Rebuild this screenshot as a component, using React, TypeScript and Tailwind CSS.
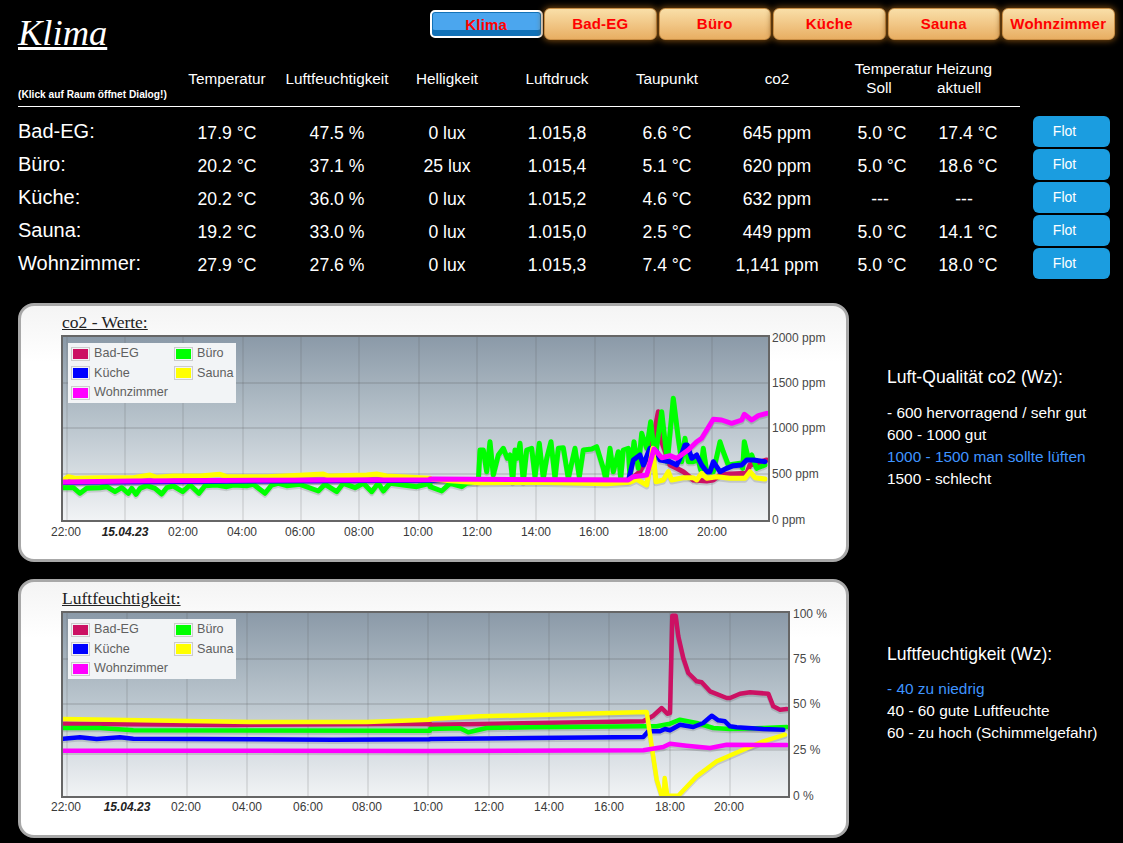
import React from "react";

type P = [number, number];
const z = (pts: P[], ox: number, oy: number): string =>
  pts.map(([x, y]) => `${(ox + x / 3).toFixed(1)},${(oy + y / 3).toFixed(1)}`).join(" ");
const join = (...parts: string[]) => parts.join(" ");

const C = { bad: "#cc1163", buero: "#00ff00", kueche: "#0000ff", sauna: "#ffff00", wohn: "#ff00ff" };

const co2L = 0, co2R = 430, co2Y = 295;
const co2Series: { color: string; d: string }[] = [
  {
    color: C.bad,
    d: join(
      z([[190, 560], [800, 556], [1290, 554]], co2L, co2Y),
      z([[145, 556], [600, 555], [630, 530], [650, 490], [670, 430], [685, 350], [695, 440], [720, 510], [740, 520], [760, 530], [790, 555], [830, 558], [850, 555], [870, 540], [900, 537], [950, 535], [960, 510], [1010, 495]], co2R, co2Y)
    ),
  },
  {
    color: C.buero,
    d: join(
      z([[190, 578], [220, 578], [240, 595], [260, 580], [300, 578], [320, 575], [345, 590], [365, 578], [385, 595], [395, 580], [408, 598], [420, 580], [440, 572], [465, 580], [485, 597], [500, 578], [520, 573], [548, 590], [570, 570], [597, 595], [615, 572], [650, 570], [680, 575], [700, 570], [740, 572], [760, 568], [795, 595], [815, 570], [835, 565], [860, 572], [900, 568], [955, 588], [975, 568], [1010, 590], [1030, 565], [1065, 578], [1090, 565], [1115, 590], [1135, 565], [1150, 588], [1170, 565], [1210, 570], [1250, 575], [1290, 565]], co2L, co2Y),
      z([[0, 575], [35, 588], [60, 565], [95, 575], [110, 565], [145, 560], [150, 465], [160, 465], [170, 530], [180, 440], [190, 540], [205, 480], [220, 460], [232, 490], [240, 480], [248, 560], [255, 465], [262, 490], [270, 445], [280, 560], [290, 465], [305, 460], [315, 545], [328, 445], [340, 550], [350, 490], [363, 440], [375, 550], [385, 460], [400, 458], [415, 550], [435, 460], [448, 545], [460, 465], [485, 462], [500, 455], [520, 520], [528, 555], [540, 460], [550, 530], [565, 470], [572, 550], [580, 465], [595, 460], [600, 550], [612, 440], [625, 520], [635, 415], [650, 460], [662, 380], [675, 490], [695, 350], [712, 500], [730, 310], [745, 430], [755, 500], [765, 430], [775, 500], [790, 500], [805, 495], [812, 525], [820, 460], [830, 530], [850, 530], [870, 440], [880, 470], [895, 510], [930, 505], [938, 520], [943, 440], [955, 490], [965, 480], [980, 520], [1005, 510]], co2R, co2Y)
    ),
  },
  {
    color: C.kueche,
    d: join(
      z([[190, 562], [800, 558], [1290, 556]], co2L, co2Y),
      z([[145, 557], [595, 558], [610, 495], [630, 480], [640, 510], [660, 460], [680, 470], [690, 495], [720, 500], [740, 510], [750, 490], [765, 450], [772, 450], [785, 490], [800, 480], [815, 510], [830, 530], [840, 530], [850, 500], [870, 530], [890, 520], [910, 512], [935, 510], [950, 495], [970, 495], [1005, 500]], co2R, co2Y)
    ),
  },
  {
    color: C.sauna,
    d: join(
      z([[190, 555], [205, 545], [225, 550], [300, 548], [400, 548], [450, 540], [470, 547], [520, 543], [600, 543], [660, 538], [680, 545], [800, 545], [900, 541], [970, 537], [985, 543], [1100, 540], [1130, 537], [1160, 543], [1290, 550]], co2L, co2Y),
      z([[0, 553], [145, 563], [310, 562], [530, 566], [600, 562], [620, 553], [650, 570], [668, 460], [678, 560], [700, 555], [715, 530], [725, 555], [760, 548], [790, 548], [800, 555], [815, 535], [830, 550], [860, 545], [900, 550], [945, 550], [960, 530], [975, 548], [1005, 552]], co2R, co2Y)
    ),
  },
  {
    color: C.wohn,
    d: join(
      z([[190, 561], [400, 558], [800, 556], [1290, 554]], co2L, co2Y),
      z([[0, 552], [595, 555], [610, 545], [650, 540], [672, 462], [695, 488], [720, 482], [740, 490], [775, 465], [800, 440], [815, 430], [850, 373], [875, 375], [905, 385], [935, 375], [943, 358], [965, 375], [985, 362], [1010, 355]], co2R, co2Y)
    ),
  },
];

const humY = 573;
const humSeries: { color: string; d: string }[] = [
  {
    color: C.bad,
    d: join(
      z([[190, 452], [700, 456], [1290, 452]], 0, humY),
      z([[0, 455], [200, 452], [640, 445], [670, 428], [695, 405], [712, 422], [720, 420], [727, 128], [737, 128], [745, 190], [760, 255], [775, 300], [800, 325], [815, 328], [840, 355], [890, 375], [900, 375], [930, 362], [960, 358], [1015, 362], [1030, 400], [1050, 410], [1070, 408]], 430, humY)
    ),
  },
  {
    color: C.buero,
    d: join(
      z([[190, 465], [300, 465], [400, 472], [1290, 473]], 0, humY),
      z([[0, 468], [90, 466], [115, 478], [170, 465], [300, 463], [640, 460], [680, 460], [720, 452], [750, 440], [800, 450], [850, 465], [900, 468], [1000, 465], [1070, 462]], 430, humY)
    ),
  },
  {
    color: C.kueche,
    d: join(
      z([[190, 497], [240, 493], [290, 498], [360, 493], [400, 497], [1000, 500], [1290, 499]], 0, humY),
      z([[0, 498], [300, 495], [640, 492], [655, 475], [690, 475], [705, 468], [720, 472], [750, 455], [790, 462], [820, 450], [845, 428], [865, 442], [885, 445], [900, 460], [920, 463], [1000, 468], [1060, 470]], 430, humY)
    ),
  },
  {
    color: C.sauna,
    d: join(
      z([[190, 438], [750, 447], [1100, 447], [1290, 440]], 0, humY),
      z([[0, 438], [150, 430], [350, 425], [650, 417], [665, 520], [680, 620], [695, 668], [702, 668], [704, 615], [712, 668], [745, 668], [800, 610], [860, 565], [940, 530], [1000, 505], [1065, 485]], 430, humY)
    ),
  },
  {
    color: C.wohn,
    d: join(
      z([[190, 533], [1290, 534]], 0, humY),
      z([[0, 534], [640, 532], [700, 522], [720, 512], [770, 518], [840, 525], [890, 515], [1070, 516]], 430, humY)
    ),
  },
];

type ChartProps = {
  id: string;
  vbY: number;
  plot: { l: number; r: number; t: number; b: number };
  vlines: number[];
  hlines: number[];
  xticks: [number, string][];
  xY: number;
  yticks: [number, string][];
  yX: number;
  sw: number;
  series: { color: string; d: string }[];
};

function Legend() {
  const items: [string, string][] = [
    ["Bad-EG", C.bad],
    ["Büro", C.buero],
    ["Küche", C.kueche],
    ["Sauna", C.sauna],
    ["Wohnzimmer", C.wohn],
  ];
  return (
    <div className="absolute left-[47px] top-[13px] w-[168px] h-[60px] bg-[#f2f4f6] pl-[3px] pt-[1px] grid grid-cols-[103px_65px] auto-rows-[19.5px] text-[12.6px] text-[#606060]">
      {items.map(([n, c]) => (
        <div key={n} className="flex items-center">
          <span className="border border-[#ccc] p-px w-[19px] h-[14px] flex mr-[4px] shrink-0">
            <span className="w-full h-full" style={{ background: c }} />
          </span>
          <span className="whitespace-nowrap">{n}</span>
        </div>
      ))}
    </div>
  );
}

function Chart({ id, vbY, plot, vlines, hlines, xticks, xY, yticks, yX, sw, series }: ChartProps) {
  return (
    <div className="relative w-[825px] h-[229px]">
      <svg width="825" height="229" viewBox={`21 ${vbY} 825 229`} className="block">
        <defs>
          <linearGradient id={`g${id}`} x1="0" y1="0" x2="0" y2="1">
            <stop offset="0" stopColor="#8b9aa8" />
            <stop offset="0.5" stopColor="#bcc7cf" />
            <stop offset="1" stopColor="#f1f3f5" />
          </linearGradient>
          <clipPath id={`c${id}`}>
            <rect x={plot.l} y={plot.t} width={plot.r - plot.l} height={plot.b - plot.t} />
          </clipPath>
        </defs>
        <rect x={plot.l} y={plot.t} width={plot.r - plot.l} height={plot.b - plot.t} fill={`url(#g${id})`} />
        {vlines.map((x) => (
          <line key={x} x1={x} x2={x} y1={plot.t} y2={plot.b} stroke="#545454" strokeOpacity="0.25" strokeWidth="1" />
        ))}
        {hlines.map((y) => (
          <line key={y} x1={plot.l} x2={plot.r} y1={y} y2={y} stroke="#545454" strokeOpacity="0.35" strokeWidth="1" />
        ))}
        <g clipPath={`url(#c${id})`} fill="none" strokeLinejoin="round" strokeLinecap="round">
          {series.map((s) => (
            <polyline key={s.color + "s"} points={s.d} stroke="#000" strokeOpacity="0.12" strokeWidth={sw} transform="translate(0 2)" />
          ))}
          {series.map((s) => (
            <polyline key={s.color} points={s.d} stroke={s.color} strokeWidth={sw} />
          ))}
        </g>
        <rect x={plot.l - 1} y={plot.t - 1} width={plot.r - plot.l + 2} height={plot.b - plot.t + 2} fill="none" stroke="#666" strokeWidth="2" />
        <g fontFamily="'Liberation Sans', Arial, sans-serif" fontSize="12" fill="#3a3a3a">
          {xticks.map(([x, t]) => (
            <text key={t} x={x} y={xY} textAnchor="middle" fontWeight={t === "15.04.23" ? 700 : 400} fontStyle={t === "15.04.23" ? "italic" : "normal"} fill={t === "15.04.23" ? "#222" : undefined}>
              {t}
            </text>
          ))}
        </g>
        <g fontFamily="'Liberation Sans', Arial, sans-serif" fontSize="12" fill="#484848">
          {yticks.map(([y, t]) => (
            <text key={t} x={yX} y={y} dominantBaseline="central">
              {t}
            </text>
          ))}
        </g>
      </svg>
      <Legend />
    </div>
  );
}

function Panel({ title, children }: { title: string; children: React.ReactNode }) {
  return (
    <div className="w-[831px] h-[259px] shrink-0 border-[3px] border-[#a8a8a8] rounded-[16px] bg-gradient-to-b from-[#f4f4f4] to-white to-[22%] overflow-hidden">
      <div className="h-[24px] pl-[41px] pt-[4px] text-[17.5px] leading-[24px] text-[#222] underline font-['Liberation_Serif',serif]">{title}</div>
      {children}
    </div>
  );
}

const nav = ["Bad-EG", "Büro", "Küche", "Sauna", "Wohnzimmer"];
const gridCols = "grid grid-cols-[154px_repeat(6,110px)_100px_72px_29px_77px]";
const rows: string[][] = [
  ["Bad-EG:", "17.9 °C", "47.5 %", "0 lux", "1.015,8", "6.6 °C", "645 ppm", "5.0 °C", "17.4 °C"],
  ["Büro:", "20.2 °C", "37.1 %", "25 lux", "1.015,4", "5.1 °C", "620 ppm", "5.0 °C", "18.6 °C"],
  ["Küche:", "20.2 °C", "36.0 %", "0 lux", "1.015,2", "4.6 °C", "632 ppm", "---", "---"],
  ["Sauna:", "19.2 °C", "33.0 %", "0 lux", "1.015,0", "2.5 °C", "449 ppm", "5.0 °C", "14.1 °C"],
  ["Wohnzimmer:", "27.9 °C", "27.6 %", "0 lux", "1.015,3", "7.4 °C", "1,141 ppm", "5.0 °C", "18.0 °C"],
];

export default function App() {
  return (
    <div className="w-[1123px] h-[843px] overflow-hidden bg-black text-white pl-[18px] font-['Liberation_Sans',Arial,sans-serif]">
      <div className="flex h-[58px]">
        <h1 className="w-[411.5px] pt-[13px] text-[36.5px] leading-[40px] italic underline decoration-[2.5px] font-normal font-['Liberation_Serif',serif]">Klima</h1>
        <div className="flex gap-[2px] mt-[8px] items-center h-[32px]">
          <button className="w-[113.5px] h-[28px] -mr-px rounded-[5px] border-[2.5px] border-white bg-[#4ba6ee] shadow-[inset_0_-6px_0_#1272b8,inset_0_0_0_1px_#1272b8] text-[15px] tracking-[0.2px] font-bold text-[#f00] leading-[21px]">Klima</button>
          {nav.map((n) => (
            <button key={n} className="w-[112.5px] h-[32px] rounded-[6px] border border-[#c98e45] bg-gradient-to-b from-[#f9dfa8] to-[#e8ae62] shadow-[0_0_6px_1px_#7a4a10] text-[15px] tracking-[0.2px] font-bold text-[#f00] leading-[28px] whitespace-nowrap">
              {n}
            </button>
          ))}
        </div>
      </div>

      <div className={`${gridCols} h-[48px] text-[15.3px] leading-[19px] w-[1002px]`}>
        <div className="self-end pb-[4px] text-[10.2px] leading-[14px] font-bold whitespace-nowrap">(Klick auf Raum öffnet Dialog!)</div>
        {["Temperatur", "Luftfeuchtigkeit", "Helligkeit", "Luftdruck", "Taupunkt", "co2"].map((h) => (
          <div key={h} className="text-center pt-[11px] whitespace-nowrap">{h}</div>
        ))}
        <div className="pt-px">
          <div className="text-right whitespace-nowrap">Temperatur</div>
          <div className="text-center pr-[6px]">Soll</div>
        </div>
        <div className="pt-px pl-[4px] whitespace-nowrap">
          <div>Heizung</div>
          <div className="pl-px">aktuell</div>
        </div>
      </div>
      <div className="w-[1002px] h-px bg-white mb-[8px]" />

      {rows.map((r) => (
        <div key={r[0]} className={`${gridCols} h-[33px] items-center`}>
          <div className="text-[20px] leading-[24px] pb-[2px] whitespace-nowrap">{r[0]}</div>
          {r.slice(1).map((v, i) => (
            <div key={i} className={`text-center text-[17.6px] leading-[22px] pt-[3px] whitespace-nowrap ${v === "---" ? (i === 6 ? "pr-[4px]" : "pr-[8px]") : ""}`}>{v}</div>
          ))}
          <div />
          <button className="w-[77px] h-[31px] rounded-[6px] bg-[#1b9de0] text-[14px] text-white pr-[14px]">Flot</button>
        </div>
      ))}

      <div className="flex mt-[23px]">
        <Panel title="co2 - Werte:">
          <Chart
            id="a"
            vbY={330}
            sw={5}
            plot={{ l: 63, r: 768, t: 337, b: 520 }}
            vlines={[67, 125, 183, 243, 301, 359, 419, 477, 536, 595, 654, 712]}
            hlines={[383, 428, 474]}
            xticks={[[66, "22:00"], [125, "15.04.23"], [183, "02:00"], [242, "04:00"], [300, "06:00"], [359, "08:00"], [418, "10:00"], [477, "12:00"], [536, "14:00"], [594, "16:00"], [653, "18:00"], [712, "20:00"]]}
            xY={536}
            yticks={[[338, "2000 ppm"], [383, "1500 ppm"], [428, "1000 ppm"], [474, "500 ppm"], [520, "0 ppm"]]}
            yX={772}
            series={co2Series}
          />
        </Panel>
        <div className="ml-[38px] pt-[63px] text-[15.4px] leading-[22px] whitespace-nowrap">
          <div className="text-[17.6px]">Luft-Qualität co2 (Wz):</div>
          <div className="mt-[14px]">- 600 hervorragend / sehr gut</div>
          <div>600 - 1000 gut</div>
          <div className="text-[#3f94ff]">1000 - 1500 man sollte lüften</div>
          <div>1500 - schlecht</div>
        </div>
      </div>

      <div className="flex mt-[17px]">
        <Panel title="Luftfeuchtigkeit:">
          <Chart
            id="b"
            vbY={606}
            sw={4.5}
            plot={{ l: 63, r: 788, t: 613, b: 796 }}
            vlines={[67, 127, 187, 247, 308, 368, 428, 489, 549, 609, 670, 730]}
            hlines={[659, 704, 750]}
            xticks={[[66, "22:00"], [127, "15.04.23"], [186, "02:00"], [247, "04:00"], [308, "06:00"], [367, "08:00"], [428, "10:00"], [489, "12:00"], [549, "14:00"], [609, "16:00"], [670, "18:00"], [729, "20:00"]]}
            xY={811}
            yticks={[[614, "100 %"], [659, "75 %"], [704, "50 %"], [750, "25 %"], [796, "0 %"]]}
            yX={793}
            series={humSeries}
          />
        </Panel>
        <div className="ml-[38px] pt-[64px] text-[15.4px] leading-[22px] whitespace-nowrap">
          <div className="text-[17.6px]">Luftfeuchtigkeit (Wz):</div>
          <div className="mt-[13px] text-[#3f94ff]">- 40 zu niedrig</div>
          <div>40 - 60 gute Luftfeuchte</div>
          <div>60 - zu hoch (Schimmelgefahr)</div>
        </div>
      </div>
    </div>
  );
}
